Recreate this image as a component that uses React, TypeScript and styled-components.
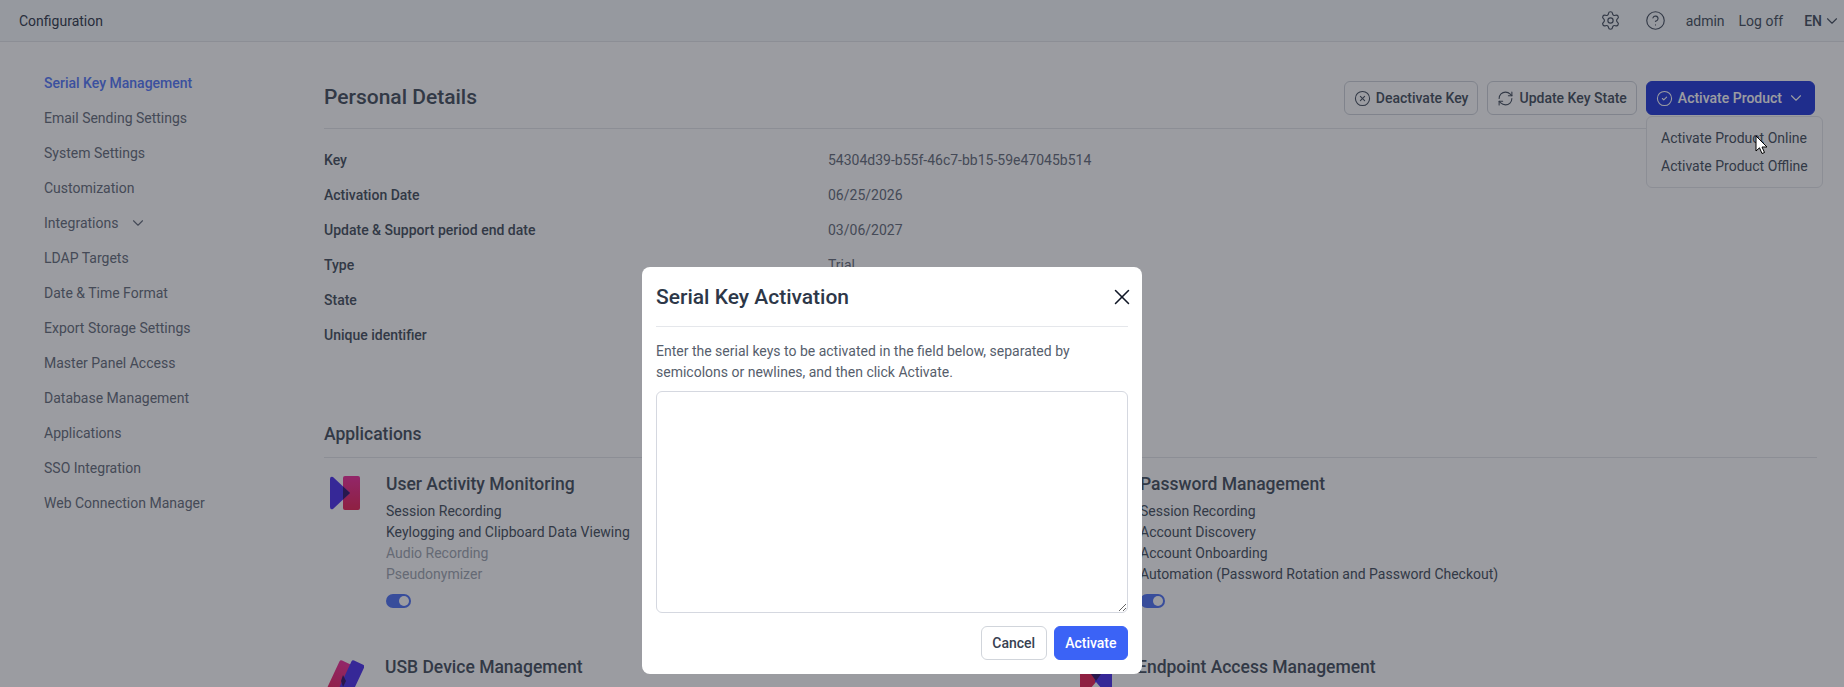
import styled, { createGlobalStyle } from "styled-components";
import { ChevronDown, CircleCheck, CircleHelp, CircleX, RefreshCw, Settings, X } from "lucide-react";

const GlobalStyle = createGlobalStyle`
  html, body {
    margin: 0;
    height: 100%;
    overflow: hidden;
    background: #fff;
    font-family: Roboto, "Liberation Sans", sans-serif;
    font-size: 14px;
    color: #1f2937;
  }
`;

const Page = styled.div`
  height: 687px;
  overflow: hidden;
  position: relative;
`;

const TopBar = styled.header`
  height: 41px;
  padding: 0 3px 0 19px;
  display: flex;
  align-items: center;
  justify-content: space-between;
  background: #f7fafc;
  border-bottom: 1px solid #e5e7eb;
  color: #374151;
`;

const TopRight = styled.div`
  display: flex;
  align-items: center;
`;

const IconSlot = styled.span<{ $gap: number }>`
  display: flex;
  margin-right: ${(p) => p.$gap}px;
  color: #4b5563;
`;

const TopLink = styled.span<{ $gap: number }>`
  margin-right: ${(p) => p.$gap}px;
  color: #4b5563;
`;

const Lang = styled.span`
  display: flex;
  align-items: center;
  gap: 1px;
  font-weight: 500;
  color: #4b5563;
`;

const Body = styled.div`
  display: flex;
`;

const Sidebar = styled.nav`
  width: 324px;
  flex: none;
  padding: 23px 0 0 44px;
  box-sizing: border-box;
`;

const NavItem = styled.div<{ $active?: boolean }>`
  height: 35px;
  display: flex;
  align-items: center;
  gap: 11px;
  color: ${(p) => (p.$active ? "#5a7dfa" : "#6b7280")};
  font-weight: ${(p) => (p.$active ? 500 : 400)};
`;

const Main = styled.main`
  flex: 1;
  padding: 39px 27px 0 0;
`;

const HeadRow = styled.div`
  height: 47px;
  display: flex;
  justify-content: space-between;
  border-bottom: 1px solid #e5e7eb;
  position: relative;
`;

const Heading = styled.h2`
  margin: 0;
  font-size: 21px;
  line-height: 32px;
  font-weight: 500;
  color: #4b5563;
`;

const Actions = styled.div`
  display: flex;
  gap: 9px;
  margin-right: 2px;
  height: 34px;
`;

const ActionButton = styled.button<{ $primary?: boolean }>`
  height: 34px;
  padding: 0 9px;
  display: flex;
  align-items: center;
  gap: 5px;
  border-radius: 6px;
  border: 1px solid ${(p) => (p.$primary ? "#2a40db" : "#d1d5db")};
  background: ${(p) => (p.$primary ? "#2a40db" : "#fff")};
  color: ${(p) => (p.$primary ? "#fff" : "#4b5563")};
  font: 500 14px Roboto, sans-serif;
`;

const Dropdown = styled.div`
  position: absolute;
  top: 35px;
  right: -6px;
  width: 175px;
  height: 70px;
  border: 1px solid #e5e7eb;
  border-radius: 6px;
  background: #fff;
  display: flex;
  flex-direction: column;
  justify-content: center;
  gap: 7px;
  color: #4b5563;

  span {
    padding-left: 14px;
    line-height: 21px;
  }
`;

const DetailRows = styled.div`
  padding-top: 13px;
`;

const DetailRow = styled.div`
  height: 35px;
  display: grid;
  grid-template-columns: 504px 1fr;
  align-items: center;
`;

const DetailLabel = styled.span`
  font-weight: 500;
  color: #4b5563;
`;

const DetailValue = styled.span`
  color: #6b7280;
`;

const AppsHeading = styled.h3`
  margin: 70px 0 0;
  height: 35px;
  font-size: 17.5px;
  line-height: 24px;
  font-weight: 500;
  color: #4b5563;
  border-bottom: 1px solid #e5e7eb;
`;

const AppsGrid = styled.div`
  display: grid;
  grid-template-columns: 750px 1fr;
  padding-top: 17px;
`;

const AppCard = styled.div`
  display: flex;
  height: 183px;
  padding-left: 6px;
  gap: 25px;
`;

const AppLogo = styled.div<{ $width: number }>`
  width: ${(p) => p.$width}px;
  flex: none;
  padding-top: 1px;
`;

const SlantMark = styled.svg`
  display: block;
  margin-left: -4px;
`;

const AppTitle = styled.div`
  font-size: 17.5px;
  line-height: 18px;
  font-weight: 500;
  color: #4b5563;
  margin-bottom: 8px;
`;

const Feature = styled.div<{ $off?: boolean }>`
  line-height: 21px;
  color: ${(p) => (p.$off ? "#a3a9b3" : "#4b5563")};
`;

const Toggle = styled.div`
  width: 25px;
  height: 14px;
  margin-top: 9px;
  border-radius: 7px;
  background: #5577f5;
  position: relative;

  &::after {
    content: "";
    position: absolute;
    right: 2px;
    top: 2px;
    width: 10px;
    height: 10px;
    border-radius: 50%;
    background: #fff;
  }
`;

const Overlay = styled.div`
  position: absolute;
  inset: 0;
  background: rgba(17, 20, 30, 0.42);
  display: flex;
  justify-content: center;
  padding-top: 267px;
  box-sizing: border-box;
`;

const Modal = styled.div`
  width: 472px;
  height: 407px;
  margin-left: -60px;
  padding: 0 14px;
  background: #fff;
  border-radius: 8px;
`;

const ModalHead = styled.div`
  height: 59px;
  display: flex;
  align-items: center;
  justify-content: space-between;
  border-bottom: 1px solid #e5e7eb;
  color: #111827;

  svg {
    margin-right: -7px;
  }
`;

const ModalTitle = styled.h2`
  margin: 0;
  font-size: 21px;
  font-weight: 500;
  color: #2d3748;
`;

const ModalText = styled.p`
  margin: 14px 0 8px;
  line-height: 21px;
  color: #565e6c;
`;

const SerialInput = styled.textarea`
  display: block;
  width: 100%;
  height: 222px;
  box-sizing: border-box;
  border: 1px solid #d5d8e0;
  border-radius: 6px;
  outline: none;
`;

const ModalFoot = styled.div`
  display: flex;
  justify-content: flex-end;
  gap: 7px;
  margin-top: 13px;
`;

const FootButton = styled.button<{ $primary?: boolean }>`
  height: 34px;
  padding: 0 10.5px;
  border-radius: 6px;
  border: 1px solid ${(p) => (p.$primary ? "#3b63f6" : "#d1d5db")};
  background: ${(p) => (p.$primary ? "#3b63f6" : "#fff")};
  color: ${(p) => (p.$primary ? "#fff" : "#374151")};
  font: 500 14px Roboto, sans-serif;
`;

const Cursor = styled.svg`
  position: absolute;
  left: 1755px;
  top: 135px;
`;

function PlayLogo() {
  return (
    <svg width="31" height="35" viewBox="0 0 31 35">
      <defs>
        <linearGradient id="upRed" x1="0" y1="0" x2="0" y2="1">
          <stop offset="0" stopColor="#f0359f" />
          <stop offset="1" stopColor="#ea2a5c" />
        </linearGradient>
      </defs>
      <rect x="13" y="0" width="17" height="34" rx="2" fill="url(#upRed)" />
      <path d="M0 3Q0 0 3 1L20 17L3 33Q0 34 0 31Z" fill="#5238ee" />
      <path d="M13 10.5L20 17L13 23.5Z" fill="#3a1d6e" />
    </svg>
  );
}

function SlantLogo() {
  return (
    <SlantMark width="38" height="38" viewBox="0 0 38 38">
      <defs>
        <linearGradient id="slRed" x1="0" y1="0" x2="0" y2="1">
          <stop offset="0" stopColor="#f0359f" />
          <stop offset="1" stopColor="#ea2a5c" />
        </linearGradient>
      </defs>
      <rect x="6" y="2" width="14" height="36" rx="2" fill="url(#slRed)" transform="rotate(25 13 20)" />
      <rect x="18" y="2" width="14" height="36" rx="2" fill="#5238ee" transform="rotate(25 25 20)" />
      <path d="M17 16L20 22L17 28L15 22Z" fill="#3a1d6e" />
    </SlantMark>
  );
}

function CrossLogo() {
  return (
    <svg width="32" height="36" viewBox="0 0 32 36">
      <rect x="0" y="0" width="17" height="36" fill="#ea2a5c" />
      <rect x="15" y="0" width="17" height="36" fill="#5238ee" />
      <path d="M11 15H21L16 22Z" fill="#3a1d6e" />
      <path d="M16 23L10 30V36H22V30Z" fill="#fff" />
    </svg>
  );
}

export default function App() {
  const navItems = [
    "Email Sending Settings",
    "System Settings",
    "Customization",
  ];
  const navRest = [
    "LDAP Targets",
    "Date & Time Format",
    "Export Storage Settings",
    "Master Panel Access",
    "Database Management",
    "Applications",
    "SSO Integration",
    "Web Connection Manager",
  ];

  return (
    <Page>
      <GlobalStyle />
      <TopBar>
        <span>Configuration</span>
        <TopRight>
          <IconSlot $gap={24}><Settings size={21} strokeWidth={1.3} /></IconSlot>
          <IconSlot $gap={20}><CircleHelp size={21} strokeWidth={1.3} /></IconSlot>
          <TopLink $gap={14}>admin</TopLink>
          <TopLink $gap={21}>Log off</TopLink>
          <Lang>EN<ChevronDown size={18} strokeWidth={1.5} /></Lang>
        </TopRight>
      </TopBar>
      <Body>
        <Sidebar>
          <NavItem $active>Serial Key Management</NavItem>
          {navItems.map((item) => <NavItem key={item}>{item}</NavItem>)}
          <NavItem>Integrations <ChevronDown size={18} strokeWidth={1.5} /></NavItem>
          {navRest.map((item) => <NavItem key={item}>{item}</NavItem>)}
        </Sidebar>
        <Main>
          <HeadRow>
            <Heading>Personal Details</Heading>
            <Actions>
              <ActionButton><CircleX size={17} strokeWidth={1.5} /> Deactivate Key</ActionButton>
              <ActionButton><RefreshCw size={17} strokeWidth={1.5} /> Update Key State</ActionButton>
              <ActionButton $primary><CircleCheck size={17} strokeWidth={1.5} /> Activate Product <ChevronDown size={18} strokeWidth={1.5} /></ActionButton>
            </Actions>
            <Dropdown>
              <span>Activate Product Online</span>
              <span>Activate Product Offline</span>
            </Dropdown>
          </HeadRow>
          <DetailRows>
            <DetailRow><DetailLabel>Key</DetailLabel><DetailValue>54304d39-b55f-46c7-bb15-59e47045b514</DetailValue></DetailRow>
            <DetailRow><DetailLabel>Activation Date</DetailLabel><DetailValue>06/25/2026</DetailValue></DetailRow>
            <DetailRow><DetailLabel>Update &amp; Support period end date</DetailLabel><DetailValue>03/06/2027</DetailValue></DetailRow>
            <DetailRow><DetailLabel>Type</DetailLabel><DetailValue>Trial</DetailValue></DetailRow>
            <DetailRow><DetailLabel>State</DetailLabel></DetailRow>
            <DetailRow><DetailLabel>Unique identifier</DetailLabel></DetailRow>
          </DetailRows>
          <AppsHeading>Applications</AppsHeading>
          <AppsGrid>
            <AppCard>
              <AppLogo $width={31}><PlayLogo /></AppLogo>
              <div>
                <AppTitle>User Activity Monitoring</AppTitle>
                <Feature>Session Recording</Feature>
                <Feature>Keylogging and Clipboard Data Viewing</Feature>
                <Feature $off>Audio Recording</Feature>
                <Feature $off>Pseudonymizer</Feature>
                <Toggle />
              </div>
            </AppCard>
            <AppCard>
              <AppLogo $width={35} />
              <div>
                <AppTitle>Password Management</AppTitle>
                <Feature>Session Recording</Feature>
                <Feature>Account Discovery</Feature>
                <Feature>Account Onboarding</Feature>
                <Feature>Automation (Password Rotation and Password Checkout)</Feature>
                <Toggle />
              </div>
            </AppCard>
            <AppCard>
              <AppLogo $width={30}><SlantLogo /></AppLogo>
              <div><AppTitle>USB Device Management</AppTitle></div>
            </AppCard>
            <AppCard>
              <AppLogo $width={32}><CrossLogo /></AppLogo>
              <div><AppTitle>Endpoint Access Management</AppTitle></div>
            </AppCard>
          </AppsGrid>
        </Main>
      </Body>
      <Overlay>
        <Modal>
          <ModalHead>
            <ModalTitle>Serial Key Activation</ModalTitle>
            <X size={26} strokeWidth={1.4} />
          </ModalHead>
          <ModalText>Enter the serial keys to be activated in the field below, separated by semicolons or newlines, and then click Activate.</ModalText>
          <SerialInput />
          <ModalFoot>
            <FootButton>Cancel</FootButton>
            <FootButton $primary>Activate</FootButton>
          </ModalFoot>
        </Modal>
      </Overlay>
      <Cursor width="14" height="20" viewBox="0 0 14 20">
        <path d="M1 1V16L4.5 12.8L7 18.5L9.5 17.5L7 12H12Z" fill="#fff" stroke="#000" strokeWidth="1" />
      </Cursor>
    </Page>
  );
}
